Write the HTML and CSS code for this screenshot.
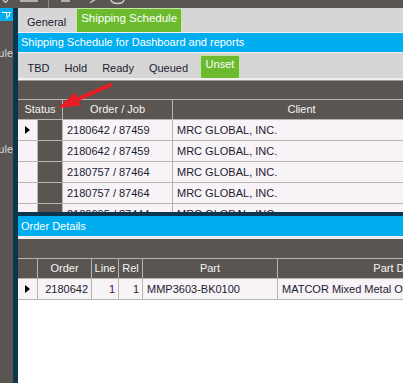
FILE: index.html
```html
<!DOCTYPE html>
<html lang="en">
<head>
    <meta charset="UTF-8">
    <title>Shipping Schedule</title>
    <link rel="stylesheet" href="styles.css">
</head>
<body>

<div class="topbar">
    <svg width="403" height="8" viewBox="0 0 403 8">
        <polyline points="3,0 5.5,2.5 8,0" fill="none" stroke="#cfcfcf" stroke-width="1.2"/>
        <line x1="20" y1="1" x2="38" y2="1" stroke="#cfcfcf" stroke-width="1.5"/>
        <line x1="48.5" y1="0" x2="48.5" y2="8" stroke="#8d8884" stroke-width="1"/>
        <line x1="61" y1="1" x2="70" y2="1" stroke="#cfcfcf" stroke-width="1.5"/>
        <path d="M95 0 Q91 1.5 90 3" fill="none" stroke="#cfcfcf" stroke-width="1.3"/>
        <path d="M111 0 Q112 3.5 117.5 3.5 Q123 3.5 124 0" fill="none" stroke="#cfcfcf" stroke-width="1.5"/>
    </svg>
</div>

<div class="app">
    <aside class="sidebar">
        <div class="pin">
            <svg width="13" height="13" viewBox="0 0 13 13">
                <line x1="2" y1="4.5" x2="11" y2="4.5" stroke="#fff" stroke-width="1"/>
                <rect x="6.5" y="4.5" width="3" height="3.5" fill="none" stroke="#fff" stroke-width="1"/>
                <line x1="7" y1="8" x2="7" y2="11" stroke="#fff" stroke-width="1"/>
            </svg>
        </div>
        <div class="side-label first">Schedule:</div>
        <div class="side-label second">Schedule</div>
    </aside>
    <div class="divider"></div>

    <main class="content">
        <div class="tabs top-tabs">
            <div class="tab">General</div>
            <div class="tab active">Shipping Schedule</div>
        </div>
        <div class="caption">Shipping Schedule for Dashboard and reports</div>
        <div class="tabs status-tabs">
            <div class="tab">TBD</div>
            <div class="tab">Hold</div>
            <div class="tab">Ready</div>
            <div class="tab">Queued</div>
            <div class="tab active">Unset</div>
        </div>

        <div class="grid-wrap schedule">
            <div class="group-panel"></div>
            <div class="grid schedule-grid">
                <div class="hcell span2">Status</div>
                <div class="hcell">Order / Job</div>
                <div class="hcell">Client</div>

                <div class="cell ind"><span class="arrow"></span></div>
                <div class="cell status"></div>
                <div class="cell">2180642 / 87459</div>
                <div class="cell">MRC GLOBAL, INC.</div>

                <div class="cell ind"></div>
                <div class="cell status"></div>
                <div class="cell">2180642 / 87459</div>
                <div class="cell">MRC GLOBAL, INC.</div>

                <div class="cell ind"></div>
                <div class="cell status"></div>
                <div class="cell">2180757 / 87464</div>
                <div class="cell">MRC GLOBAL, INC.</div>

                <div class="cell ind"></div>
                <div class="cell status"></div>
                <div class="cell">2180757 / 87464</div>
                <div class="cell">MRC GLOBAL, INC.</div>

                <div class="cell ind"></div>
                <div class="cell status"></div>
                <div class="cell">2180695 / 87444</div>
                <div class="cell">MRC GLOBAL, INC.</div>
            </div>
        </div>

        <div class="split"></div>
        <div class="caption details">Order Details</div>

        <div class="grid-wrap detail">
            <div class="group-panel"></div>
            <div class="grid detail-grid">
                <div class="hcell"></div>
                <div class="hcell">Order</div>
                <div class="hcell">Line</div>
                <div class="hcell">Rel</div>
                <div class="hcell">Part</div>
                <div class="hcell">Part Description</div>

                <div class="cell ind"><span class="arrow"></span></div>
                <div class="cell num">2180642</div>
                <div class="cell num line">1</div>
                <div class="cell num rel">1</div>
                <div class="cell">MMP3603-BK0100</div>
                <div class="cell">MATCOR Mixed Metal Oxide Anode</div>
            </div>
        </div>
    </main>
</div>

<svg class="callout" width="403" height="383" viewBox="0 0 403 383">
    <line x1="110" y1="85" x2="76" y2="100" stroke="#ec1c24" stroke-width="4" stroke-linecap="round"/>
    <polygon points="58,108 75,92.5 81,105.5" fill="#ec1c24"/>
</svg>

</body>
</html>
```

FILE: styles.css
```css
body {
    margin: 0;
    width: 403px;
    height: 383px;
    overflow: hidden;
    background: #5a5551;
    font-family: 'Liberation Sans', Arial, sans-serif;
    font-size: 11px;
    color: #1b1b30;
    position: relative;
}

.topbar {
    height: 8px;
    background: #5a5551;
}

.topbar svg {
    display: block;
}

.app {
    display: flex;
    height: 375px;
}

.sidebar {
    width: 13px;
    background: #5a5551;
    overflow: hidden;
    flex-shrink: 0;
}

.pin {
    height: 13px;
    background: #00aeef;
}

.pin svg {
    display: block;
}

.side-label {
    color: #d9d9d9;
    font-size: 11px;
    white-space: nowrap;
    direction: rtl;
    width: 13px;
    text-align: right;
}

.side-label.first {
    margin-top: 26px;
}

.side-label.second {
    margin-top: 84px;
}

.divider {
    width: 5px;
    background: #0d3550;
    flex-shrink: 0;
}

.content {
    flex: 1;
    background: #fff;
    display: flex;
    flex-direction: column;
    overflow: hidden;
}

.tabs {
    display: flex;
    align-items: flex-end;
    background: #d6d6d6;
}

.top-tabs {
    height: 24px;
    border-bottom: 1px solid #f2f2f2;
}

.top-tabs .tab {
    padding: 0 10px 0 9px;
    line-height: 20px;
    height: 20px;
}

.top-tabs .tab.active {
    height: 23px;
    line-height: 19px;
    padding: 0 4px 0 4px;
    font-size: 11.5px;
}

.status-tabs {
    height: 25px;
    border-top: 1px solid #f2f2f2;
    padding-left: 2px;
    border-bottom: 2px solid #f0eeee;
}

.status-tabs .tab {
    padding: 0 7.5px;
    height: 20px;
    line-height: 20px;
}

.status-tabs .tab.active {
    height: 22px;
    line-height: 16px;
    margin-left: 4px;
    padding: 0 5px;
}

.tab.active {
    background: #6cbb2f;
    color: #fff;
    border: 1px solid #c5e6a4;
    border-bottom: none;
    border-radius: 2px 2px 0 0;
}

.caption {
    background: #00aeef;
    color: #fff;
    height: 19px;
    line-height: 19px;
    padding-left: 3px;
}

.caption.details {
    height: 20px;
    line-height: 20px;
    border-bottom: 3px solid #eeeeee;
}

.grid-wrap {
    overflow: hidden;
    border-top: 1px solid #9c9c9c;
}

.grid-wrap.schedule {
    height: 131px;
}

.grid-wrap.detail {
    border-top: none;
    flex: 1;
}

.group-panel {
    height: 18px;
    background: #5a5551;
}

.detail .group-panel {
    height: 19px;
}

.grid {
    display: grid;
    border-top: 1px solid #b8b4b4;
}

.schedule-grid {
    grid-template-columns: 20px 25px 110px 258px;
    grid-auto-rows: 21px;
    grid-template-rows: 20px;
}

.detail-grid {
    grid-template-columns: 20px 54px 27px 24px 135px 270px;
    grid-auto-rows: 21px;
    grid-template-rows: 20px;
}

.hcell {
    background: #5a5551;
    color: #f4f4f4;
    text-align: center;
    border-right: 1px solid #b8b4b4;
    border-bottom: 1px solid #b8b4b4;
    line-height: 19px;
    white-space: nowrap;
    overflow: hidden;
}

.span2 {
    grid-column: span 2;
}

.cell {
    background: #f7f3f7;
    border-right: 1px solid #b8b4b4;
    border-bottom: 1px solid #b8b4b4;
    line-height: 20px;
    padding: 0 4px;
    white-space: nowrap;
    overflow: hidden;
}

.cell.status {
    background: #5a5551;
}

.cell.ind {
    padding: 0;
    display: flex;
    align-items: center;
    padding-left: 7px;
}

.arrow {
    width: 0;
    height: 0;
    border-top: 4.5px solid transparent;
    border-bottom: 4.5px solid transparent;
    border-left: 5px solid #000;
}

.cell.num {
    text-align: right;
    padding: 0 3px;
}

.cell.line {
    color: #4a1050;
}

.cell.rel {
    color: #2a2a10;
}

.split {
    height: 4px;
    background: #0d3550;
}

.callout {
    position: absolute;
    top: 0;
    left: 0;
    pointer-events: none;
}
```
